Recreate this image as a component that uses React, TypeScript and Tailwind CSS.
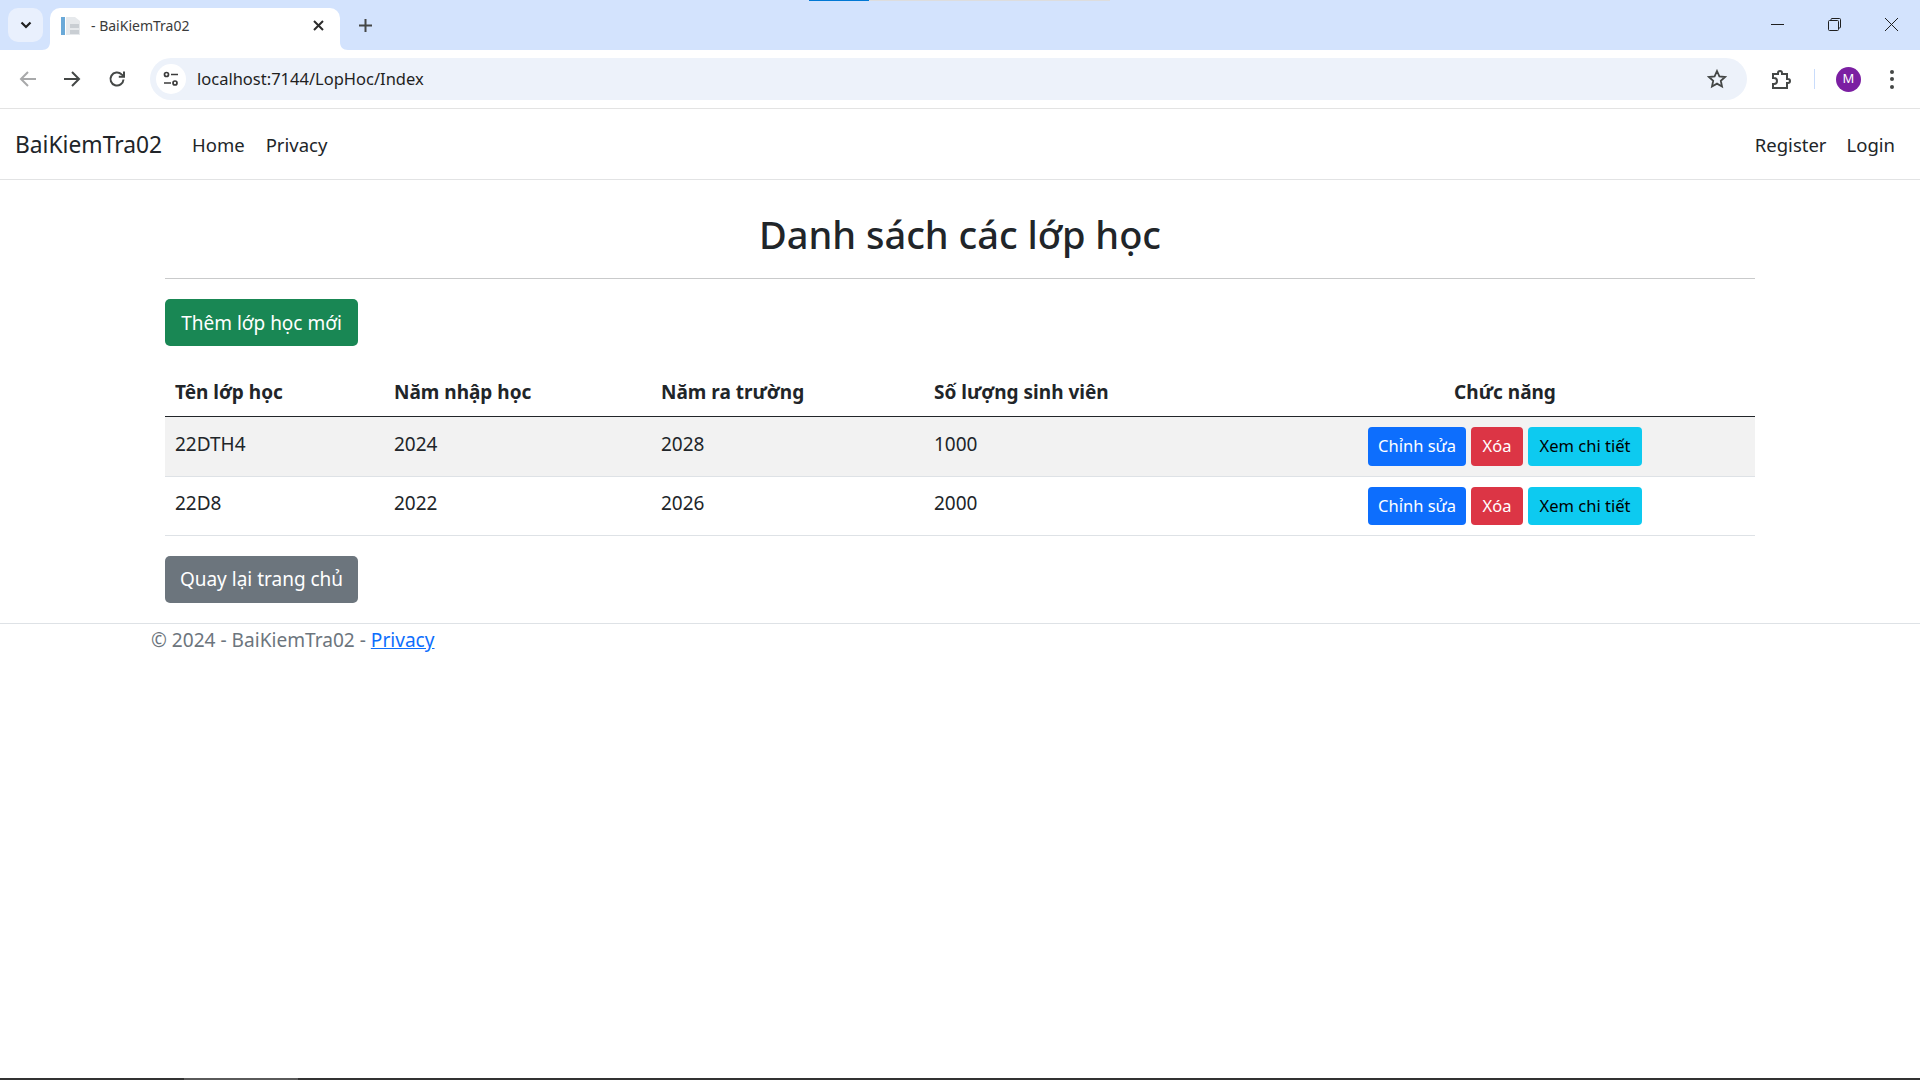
const font = "font-['Noto_Sans','Open_Sans',sans-serif]";

const rows = [
  { name: "22DTH4", start: "2024", end: "2028", count: "1000", striped: true, rowH: "h-[60px]", btnH: "h-[39px]" },
  { name: "22D8", start: "2022", end: "2026", count: "2000", striped: false, rowH: "h-[59px]", btnH: "h-[38px]" },
];

function TabBar() {
  return (
    <div className="relative flex h-[50px] items-end bg-[#d3e3fd] pl-2">
      {/* download progress strip */}
      <div className="absolute left-[809px] top-0 h-px w-[60px] bg-[#0078d4]" />
      <div className="absolute left-[869px] top-0 h-px w-[241px] bg-[#dddddd]" />

      <div className="mb-2 flex h-[34px] w-[35px] items-center justify-center rounded-[10px] bg-[#e9f0fd]">
        <svg width="12" height="8" viewBox="0 0 12 8" fill="none" stroke="#1f1f1f" strokeWidth="2.2">
          <path d="M1.5 1.5 6 6l4.5-4.5" />
        </svg>
      </div>

      <div className="relative ml-[7px] flex h-[42px] w-[290px] items-center rounded-t-[10px] bg-white pb-[7px] pl-[11px] pr-[16px]">
        <svg className="absolute bottom-0 left-[-8px]" width="8" height="8" viewBox="0 0 8 8">
          <path d="M8 0v8H0c5 0 8-3 8-8z" fill="#fff" />
        </svg>
        <svg className="absolute bottom-0 right-[-8px]" width="8" height="8" viewBox="0 0 8 8">
          <path d="M0 0v8h8C3 8 0 5 0 0z" fill="#fff" />
        </svg>
        <svg width="20" height="20" viewBox="0 0 20 20">
          <rect x="0" y="1" width="4" height="18" fill="#6aa9d8" />
          <path d="M5 1h9l5 4v14H5z" fill="#e6e9ec" />
          <rect x="9" y="8" width="9" height="4" fill="#c9ced3" />
          <rect x="9" y="14" width="9" height="4" fill="#c9ced3" />
        </svg>
        <span className={`ml-[10px] flex-1 text-[14px] text-[#3b3b3b] ${font}`}>- BaiKiemTra02</span>
        <svg width="11" height="11" viewBox="0 0 11 11" stroke="#2b2b2b" strokeWidth="2">
          <path d="M1 1l9 9M10 1l-9 9" />
        </svg>
      </div>

      <div className="mb-[15px] ml-[18px] flex h-[20px] w-[14px] items-center justify-center">
        <svg width="13" height="13" viewBox="0 0 13 13" stroke="#444746" strokeWidth="2">
          <path d="M6.5 0v13M0 6.5h13" />
        </svg>
      </div>

      <div className="mb-[19px] ml-auto flex items-center gap-[44px] pr-[22px]">
        <svg width="13" height="13" viewBox="0 0 13 13" stroke="#1f1f1f" strokeWidth="1" fill="none">
          <path d="M0 6.5h13" />
        </svg>
        <svg width="13" height="13" viewBox="0 0 13 13" stroke="#1f1f1f" strokeWidth="1" fill="none">
          <rect x="0.5" y="2.5" width="10" height="10" rx="1" />
          <path d="M3 2.5V1.5a1 1 0 0 1 1-1h7.5a1 1 0 0 1 1 1V9a1 1 0 0 1-1 1h-1" />
        </svg>
        <svg width="13" height="13" viewBox="0 0 13 13" stroke="#1f1f1f" strokeWidth="1" fill="none">
          <path d="M0 0l13 13M13 0L0 13" />
        </svg>
      </div>
    </div>
  );
}

function Toolbar() {
  return (
    <div className="flex h-[59px] items-center rounded-t-[10px] border-b border-[#e3e3e3] bg-white pl-[19px]">
      <svg width="18" height="18" viewBox="0 0 18 18" fill="none" stroke="#a8a9aa" strokeWidth="2">
        <path d="M17 9H2M9 2 2 9l7 7" />
      </svg>
      <svg className="ml-[26px]" width="18" height="18" viewBox="0 0 18 18" fill="none" stroke="#444746" strokeWidth="2">
        <path d="M1 9h15M9 2l7 7-7 7" />
      </svg>
      <svg className="ml-[27px]" width="18" height="18" viewBox="0 0 18 18" fill="none" stroke="#444746" strokeWidth="2">
        <path d="M15.5 9.5A6.5 6.5 0 1 1 13.6 4.4L16 6.6" />
        <path d="M16 1.5v5.2h-5.2" />
      </svg>

      <div className="ml-[24px] flex h-[42px] w-[1597px] items-center rounded-full bg-[#edf2fa] pl-[6px] pr-[20px]">
        <div className="flex h-[30px] w-[30px] items-center justify-center rounded-full bg-white">
          <svg width="16" height="16" viewBox="0 0 16 16" fill="none" stroke="#3c3c3c" strokeWidth="1.7">
            <circle cx="3.5" cy="3.5" r="2" />
            <path d="M8 3.5h7M1 12h7" />
            <circle cx="12" cy="12" r="2" />
          </svg>
        </div>
        <span className={`ml-[11px] flex-1 text-[16.5px] text-[#1f1f1f] ${font}`}>localhost:7144/LopHoc/Index</span>
        <svg width="20" height="20" viewBox="0 0 20 20" fill="none" stroke="#444746" strokeWidth="1.8">
          <path d="m10 2 2.4 5.4 5.6.6-4.2 3.8 1.2 5.7L10 14.6l-5 2.9 1.2-5.7L2 8l5.6-.6z" />
        </svg>
      </div>

      <svg className="ml-[24px]" width="21" height="21" viewBox="0 0 21 21" fill="none" stroke="#444746" strokeWidth="2">
        <path d="M2 5h5V4a2 2 0 0 1 4 0v1h5v5h1a2 2 0 0 1 0 4h-1v5H2v-4h1a2.5 2.5 0 0 0 0-6H2z" />
      </svg>
      <div className="ml-[22px] h-5 w-px bg-[#c9dcfb]" />
      <div className="ml-[21px] flex h-[25px] w-[25px] items-center justify-center rounded-full bg-[#7b1fa2]">
        <span className={`text-[13px] text-white ${font}`}>M</span>
      </div>
      <div className="ml-[29px] flex flex-col gap-[3.5px]">
        <div className="h-1 w-1 rounded-full bg-[#444746]" />
        <div className="h-1 w-1 rounded-full bg-[#444746]" />
        <div className="h-1 w-1 rounded-full bg-[#444746]" />
      </div>
    </div>
  );
}

function Navbar() {
  return (
    <nav className="flex h-[71px] items-center border-b border-[#e2e3e4] bg-white pl-[15px] pr-[25px] pt-[2px] text-[#212529]">
      <span className="text-[22.8px]">BaiKiemTra02</span>
      <span className="ml-[30px] text-[18.5px]">Home</span>
      <span className="ml-[21px] text-[18.5px]">Privacy</span>
      <span className="ml-auto text-[18.5px]">Register</span>
      <span className="ml-[20px] text-[18.5px]">Login</span>
    </nav>
  );
}

function LopHocTable() {
  return (
    <table className="w-full table-fixed border-collapse text-[19px] text-[#212529]">
      <colgroup>
        <col className="w-[219px]" />
        <col className="w-[267px]" />
        <col className="w-[273px]" />
        <col className="w-[329px]" />
        <col />
      </colgroup>
      <thead>
        <tr className="h-[70px] border-b border-[#212529]">
          <th className="px-[10px] pt-[22px] text-left font-bold">Tên lớp học</th>
          <th className="px-[10px] pt-[22px] text-left font-bold">Năm nhập học</th>
          <th className="px-[10px] pt-[22px] text-left font-bold">Năm ra trường</th>
          <th className="px-[10px] pt-[22px] text-left font-bold">Số lượng sinh viên</th>
          <th className="pl-[12px] pr-[10px] pt-[22px] text-center font-bold">Chức năng</th>
        </tr>
      </thead>
      <tbody>
        {rows.map((row) => (
          <tr key={row.name} className={`border-b border-[#dee2e6] ${row.striped ? "bg-[#f2f2f2]" : "bg-white"}`}>
            <td className={`px-[10px] pb-[4px] align-middle ${row.rowH}`}>{row.name}</td>
            <td className="px-[10px] pb-[4px] align-middle">{row.start}</td>
            <td className="px-[10px] pb-[4px] align-middle">{row.end}</td>
            <td className="px-[10px] pb-[4px] align-middle">{row.count}</td>
            <td className="pl-[12px] pr-[10px] pt-[1px] align-middle">
              <div className="flex justify-center gap-[5px] text-[16.5px]">
                <span className={`flex w-[98px] items-center justify-center rounded-[4px] bg-[#0d6efd] text-white ${row.btnH}`}>Chỉnh sửa</span>
                <span className={`flex w-[52px] items-center justify-center rounded-[4px] bg-[#dc3545] text-white ${row.btnH}`}>Xóa</span>
                <span className={`flex w-[114px] items-center justify-center rounded-[4px] bg-[#0dcaf0] text-black ${row.btnH}`}>Xem chi tiết</span>
              </div>
            </td>
          </tr>
        ))}
      </tbody>
    </table>
  );
}

export default function App() {
  return (
    <div className={`flex h-screen flex-col overflow-hidden bg-white ${font}`}>
      <TabBar />
      <Toolbar />
      <Navbar />

      <main className="mx-[165px] flex flex-col">
        <h1 className="flex h-[99px] items-center justify-center border-b border-[#c9cacb] pt-[11px] text-[38px] font-medium text-[#212529]">
          Danh sách các lớp học
        </h1>
        <span className="mt-[20px] flex h-[47px] w-[193px] items-center justify-center rounded-[5px] bg-[#198754] pt-[2px] text-[19px] text-white">
          Thêm lớp học mới
        </span>
        <LopHocTable />
        <span className="mt-[20px] flex h-[47px] w-[193px] items-center justify-center rounded-[5px] bg-[#6c757d] text-[19px] text-white">
          Quay lại trang chủ
        </span>
      </main>

      <footer className="mt-[20px] border-t border-[#dee2e6] pl-[151px] pt-[2px] text-[19.1px] text-[#6c757d]">
        © 2024 - BaiKiemTra02 - <span className="text-[#0d6efd] underline">Privacy</span>
      </footer>

      <div className="mt-auto flex h-[2px] bg-[#333333]">
        <div className="ml-[184px] w-[114px] bg-[#5a5a5a]" />
      </div>
    </div>
  );
}
